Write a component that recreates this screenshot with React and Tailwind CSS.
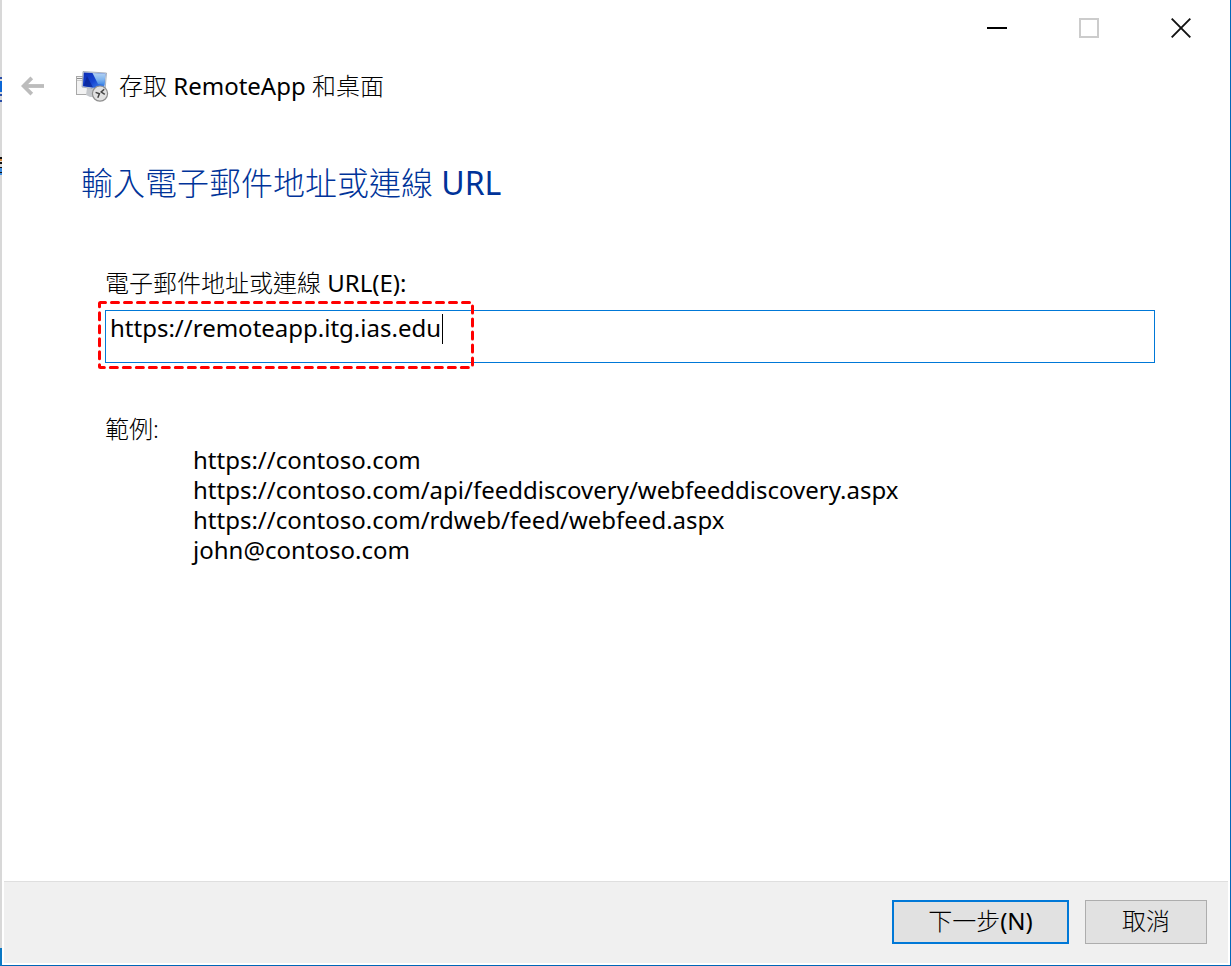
import React from 'react';

const EXAMPLES = [
  'https://contoso.com',
  'https://contoso.com/api/feeddiscovery/webfeeddiscovery.aspx',
  'https://contoso.com/rdweb/feed/webfeed.aspx',
  'john@contoso.com',
];

function BackIcon() {
  return (
    <svg width="24" height="20" viewBox="0 0 24 20" fill="none" stroke="#bcbcbc" strokeWidth="3.8" aria-hidden="true">
      <path d="M2.5 10H23" />
      <path d="M10.8 1.8L2.6 10l8.2 8.2" />
    </svg>
  );
}

function RemoteAppIcon() {
  return (
    <svg width="34" height="32" viewBox="0 0 34 32" aria-hidden="true">
      <defs>
        <linearGradient id="screen" x1="0" y1="0" x2="1" y2="1">
          <stop offset="0" stopColor="#0a2bb4" />
          <stop offset="0.5" stopColor="#1746d2" />
          <stop offset="1" stopColor="#4c95ee" />
        </linearGradient>
        <linearGradient id="gloss" x1="0" y1="0" x2="0" y2="1">
          <stop offset="0" stopColor="#b4d2f2" />
          <stop offset="0.55" stopColor="#7fb4ef" />
          <stop offset="1" stopColor="#3c86e6" />
        </linearGradient>
      </defs>
      <rect x="0.5" y="6.5" width="15" height="18" fill="#f2f2f2" stroke="#a9a9a9" />
      <path d="M1 8.5h7" stroke="#8d8d8d" />
      <path d="M1 10.5h7" stroke="#c9c9c9" />
      <path d="M11 18l10 2-1 7h-6l-4-2z" fill="#c4c7cb" />
      <path d="M7 1.5L30.5 3 29 20.5 6 17z" fill="#d5dde6" stroke="#8f99a6" strokeWidth="0.7" />
      <path d="M7.8 2.4L29.4 3.8 28 19.2 6.8 16.2z" fill="url(#screen)" />
      <path d="M16.5 3L29.4 3.8 28.4 15 22 14z" fill="url(#gloss)" />
      <path d="M7.5 16L11 6 17 17.5z" fill="#061c86" opacity="0.6" />
      <circle cx="24" cy="23.6" r="7.6" fill="#e2e2e2" stroke="#8f8f8f" strokeWidth="1.2" />
      <path d="M19.6 22.4l3.8 1.4-1.6 4" fill="none" stroke="#444" strokeWidth="1.5" />
      <path d="M28.2 19.2l-3 2.8 3.6 2.4" fill="none" stroke="#444" strokeWidth="1.5" />
    </svg>
  );
}

function DesktopEdge() {
  return (
    <div className="relative flex w-[2px] shrink-0 flex-col bg-[#d8d8d8]" aria-hidden="true">
      <svg className="absolute left-0 top-[76px]" width="2" height="100" viewBox="0 0 2 100">
        <path d="M0 1h2v2H0zM0 18h2v2H0zM0 24h2v2H0z" fill="#2b4fa8" />
        <path d="M0 5h2v11H0z" fill="#0a66d6" />
        <path d="M0 81h2v2H0zM0 86h2v2H0zM0 91h2v1H0zM0 96h2v1H0z" fill="#111" />
        <path d="M0 83h2v2H0z" fill="#d98a3c" />
        <path d="M0 92h2v4H0zM0 97h2v2H0z" fill="#3f8ee0" />
      </svg>
      <div className="mt-auto h-[18px] bg-[#0a78c4]" />
    </div>
  );
}

function TitleBar() {
  return (
    <div className="flex h-14 justify-end pr-px">
      <button type="button" aria-label="最小化" className="flex w-[92px] items-center justify-center">
        <svg width="20" height="20" viewBox="0 0 20 20" aria-hidden="true">
          <path d="M0 10h20" stroke="#000" strokeWidth="2" />
        </svg>
      </button>
      <button type="button" aria-label="最大化" disabled className="flex w-[92px] items-center justify-center">
        <svg width="20" height="20" viewBox="0 0 20 20" fill="none" aria-hidden="true">
          <rect x="1" y="1" width="18" height="18" stroke="#ccc" strokeWidth="2" />
        </svg>
      </button>
      <button type="button" aria-label="關閉" className="flex w-[92px] items-center justify-center">
        <svg width="20" height="20" viewBox="0 0 20 20" stroke="#111" strokeWidth="1.9" aria-hidden="true">
          <path d="M0.7 0.7l18.6 18.6M19.3 0.7L0.7 19.3" />
        </svg>
      </button>
    </div>
  );
}

export default function App() {
  return (
    <div className="flex min-h-screen bg-white font-['Noto_Sans','Noto_Sans_CJK_TC',sans-serif] text-2xl font-light text-black">
      <DesktopEdge />
      <div className="flex min-w-0 grow flex-col border-b border-r border-[#0067b8] px-[2px] pb-[2px]">
        <TitleBar />
        <header className="flex h-[60px] items-center pl-[17px]">
          <button type="button" aria-label="上一步" disabled>
            <BackIcon />
          </button>
          <div className="ml-[31px] flex items-center gap-[9px]">
            <RemoteAppIcon />
            <p className="leading-8 font-normal">
              <span className="font-light">存取</span> RemoteApp <span className="font-light">和桌面</span>
            </p>
          </div>
        </header>

        <main className="grow pl-[77px] pr-[73px] pt-[45px]">
          <h1 className="text-[32px] leading-[44px] text-[#003399]">輸入電子郵件地址或連線 <span className="font-normal">URL</span></h1>
          <form className="pl-6 pt-[62px]">
            <label htmlFor="connection-url" className="block h-[43px] leading-8">
              電子郵件地址或連線 <span className="font-normal">URL(E):</span>
            </label>
            <div className="relative">
              <input
                id="connection-url"
                type="text"
                defaultValue="https://remoteapp.itg.ias.edu"
                className="block h-[53px] w-full border border-[#0078d7] bg-white pb-[18px] pl-1 font-normal outline-none"
              />
              <span className="absolute left-[337px] top-1 h-[30px] w-px bg-black" aria-hidden="true" />
              <svg className="pointer-events-none absolute -left-2 -top-[10px]" width="378" height="70" viewBox="0 0 378 70" fill="none" aria-hidden="true">
                <rect x="2.5" y="2.5" width="373" height="65" rx="1" stroke="#f00" strokeWidth="3" strokeDasharray="7 6" strokeDashoffset="2" strokeLinecap="round" />
              </svg>
            </div>
          </form>
          <section className="pl-6 pt-[50px]">
            <h2 className="leading-8">範例:</h2>
            <ul className="pl-[88px] leading-[30px] font-normal">
              {EXAMPLES.map((example) => (
                <li key={example}>{example}</li>
              ))}
            </ul>
          </section>
        </main>

        <footer className="flex h-[82px] items-start justify-end gap-4 border-t border-[#dfdfdf] bg-[#f0f0f0] pr-[21px] pt-[18px]">
          <button type="button" className="h-11 w-[177px] border-2 border-[#0078d7] bg-[#e1e1e1] pb-[2px]">
            下一步<span className="font-normal">(N)</span>
          </button>
          <button type="button" className="h-11 w-[122px] border border-[#adadad] bg-[#e1e1e1] pb-[2px]">取消</button>
        </footer>
      </div>
    </div>
  );
}
